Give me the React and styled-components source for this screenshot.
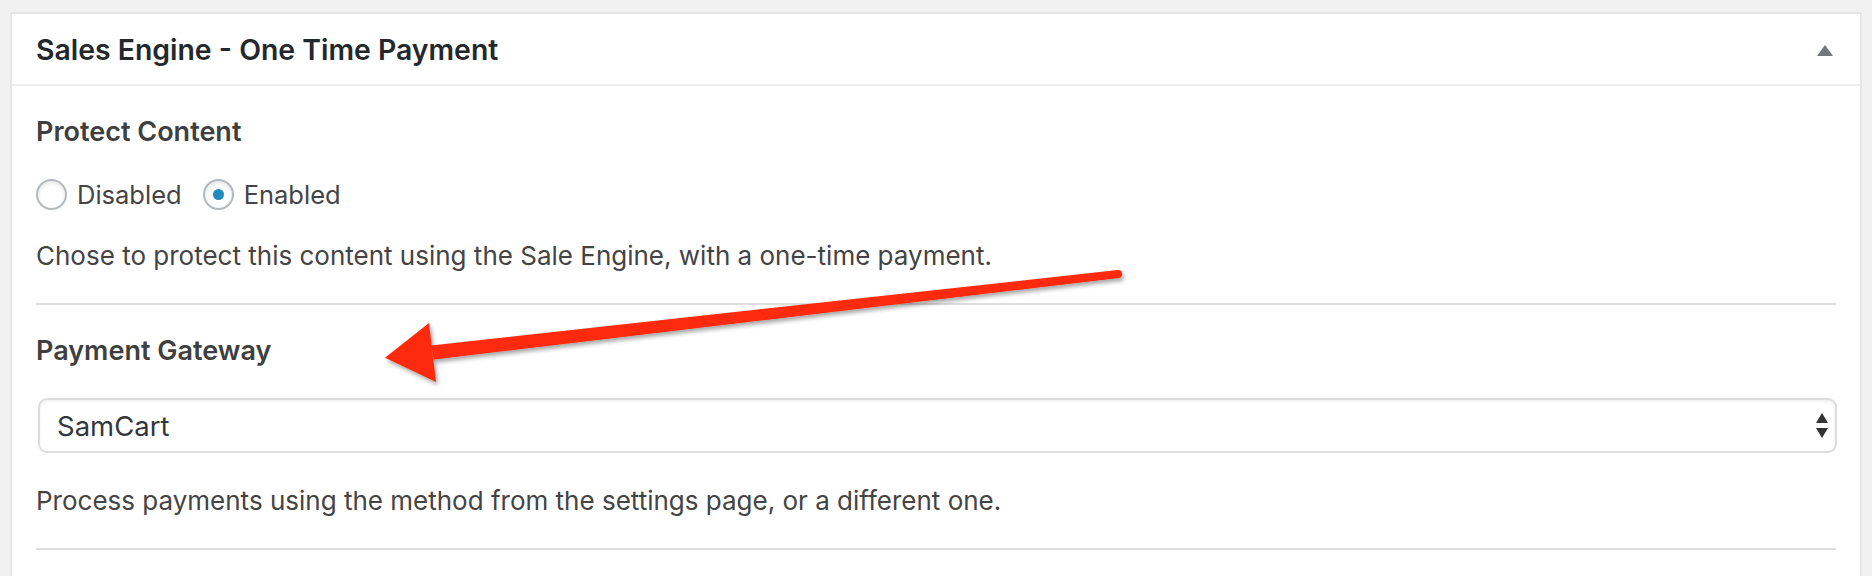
import styled, { createGlobalStyle } from 'styled-components'

const GlobalStyle = createGlobalStyle`
  html, body {
    margin: 0;
    padding: 0;
    overflow: hidden;
  }
  body {
    background: #f1f1f1;
    font-family: Inter, "Noto Sans", sans-serif;
    color: #444;
  }
`

const Page = styled.div`
  position: relative;
  width: 1872px;
  height: 576px;
  padding: 12px 10px 0;
  box-sizing: border-box;
  overflow: hidden;
`

const Postbox = styled.div`
  background: #fff;
  border: 2px solid #e5e5e5;
  border-bottom: none;
  min-height: 620px;
`

const Hndle = styled.div`
  display: flex;
  align-items: center;
  justify-content: space-between;
  height: 72px;
  box-sizing: border-box;
  padding: 2px 27px 0 24px;
  border-bottom: 2px solid #eee;
`

const Title = styled.h2`
  margin: 0;
  font-size: 28.4px;
  font-weight: 600;
  line-height: 1;
  color: #23282d;
`

const Inside = styled.div`
  padding: 0 24px;
`

const Field = styled.div`
  display: flex;
  flex-direction: column;
  gap: 27px;
  padding: 28px 0 29px;
  border-bottom: 2px solid #dedede;
`

const FieldLabel = styled.div`
  font-size: 27px;
  font-weight: 600;
  line-height: 36px;
  color: #3f3f3f;
`

const RadioRow = styled.div`
  display: flex;
  align-items: center;
  height: 34px;
`

const RadioLabel = styled.label`
  display: flex;
  align-items: center;
  gap: 10px;
  margin-right: 21px;
  font-size: 25.5px;
  color: #444;
`

const Radio = styled.span`
  position: relative;
  width: 31px;
  height: 31px;
  box-sizing: border-box;
  border-radius: 50%;
  border: 2px solid #b4b9be;
  background: #fff;
  box-shadow: inset 0 2px 4px rgba(0, 0, 0, 0.1);

  &::after {
    content: '';
    display: ${({ $checked }) => ($checked ? 'block' : 'none')};
    position: absolute;
    left: 50%;
    top: 50%;
    width: 11px;
    height: 11px;
    margin: -5.5px 0 0 -5.5px;
    border-radius: 50%;
    background: #1e8cbe;
  }
`

const Description = styled.p`
  margin: 0;
  font-size: 26px;
  line-height: 36px;
  color: #444;
`

const SelectBox = styled.div`
  display: flex;
  align-items: center;
  justify-content: space-between;
  height: 55px;
  margin: 2px -1px 3px 2px;
  padding: 0 7px 0 17px;
  box-sizing: border-box;
  border: 2px solid #ddd;
  border-radius: 9px;
  box-shadow: inset 0 2px 3px rgba(0, 0, 0, 0.06);
  font-size: 27.5px;
  color: #32373c;
`

function ToggleArrow() {
  return (
    <svg width="16" height="11" viewBox="0 0 16 11">
      <path d="M0 11 L8 0 L16 11 Z" fill="#72777c" />
    </svg>
  )
}

function SelectArrows() {
  return (
    <svg width="12" height="25" viewBox="0 0 12 25">
      <path d="M0 10 L6 0 L12 10 Z" fill="#333" />
      <path d="M0 15 L12 15 L6 25 Z" fill="#333" />
    </svg>
  )
}

const Annotation = styled.svg`
  position: absolute;
  left: 0;
  top: 0;
  pointer-events: none;
`

function RedArrow() {
  return (
    <Annotation width="1872" height="576" viewBox="0 0 1872 576">
      <defs>
        <filter id="arrowShadow" x="-10%" y="-50%" width="120%" height="200%">
          <feDropShadow dx="2" dy="3" stdDeviation="2" floodColor="#000" floodOpacity="0.35" />
        </filter>
      </defs>
      <g filter="url(#arrowShadow)" fill="#fe2a0a">
        <path d="M431.2 345.5 L1117.5 270 L1118.5 278 L433.8 359.5 Z" />
        <circle cx="1118" cy="274" r="4" />
        <path d="M385 357.7 L429 323 L436 382 Z" />
      </g>
    </Annotation>
  )
}

export default function App() {
  return (
    <>
      <GlobalStyle />
      <Page>
        <Postbox>
          <Hndle>
            <Title>Sales Engine - One Time Payment</Title>
            <ToggleArrow />
          </Hndle>
          <Inside>
            <Field>
              <FieldLabel>Protect Content</FieldLabel>
              <RadioRow>
                <RadioLabel>
                  <Radio />
                  Disabled
                </RadioLabel>
                <RadioLabel>
                  <Radio $checked />
                  Enabled
                </RadioLabel>
              </RadioRow>
              <Description>
                Chose to protect this content using the Sale Engine, with a one-time payment.
              </Description>
            </Field>
            <Field>
              <FieldLabel>Payment Gateway</FieldLabel>
              <SelectBox>
                <span>SamCart</span>
                <SelectArrows />
              </SelectBox>
              <Description>
                Process payments using the method from the settings page, or a different one.
              </Description>
            </Field>
          </Inside>
        </Postbox>
        <RedArrow />
      </Page>
    </>
  )
}
